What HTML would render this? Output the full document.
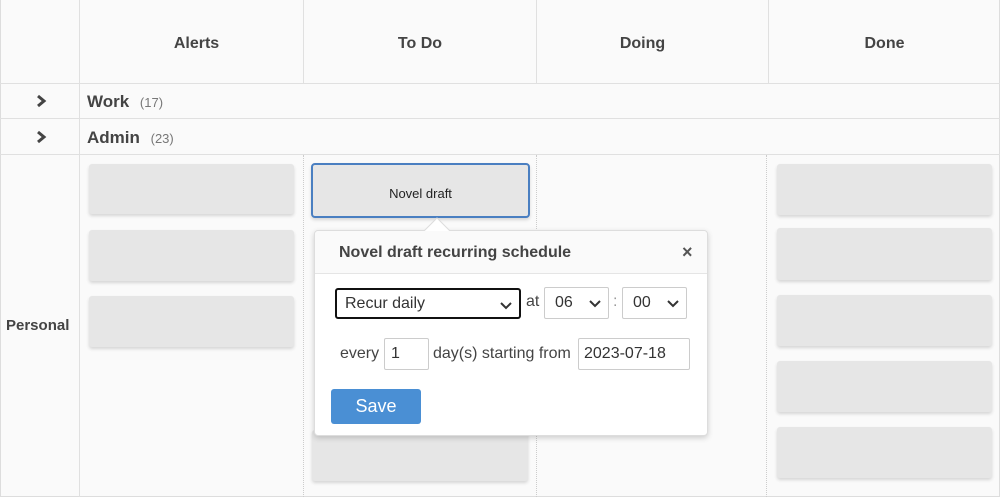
<!DOCTYPE html>
<html><head><style>
*{box-sizing:border-box;margin:0;padding:0}
body{width:1000px;height:497px;background:#fafafa;font-family:"Liberation Sans",Arial,sans-serif;position:relative;overflow:hidden;color:#444}
.a{position:absolute}
.hl{position:absolute;height:1px;background:#e0e0e0}
.vl{position:absolute;width:1px;background:#e0e0e0}
.dl{position:absolute;width:0;border-left:1px dotted #ccc}
.h{position:absolute;top:2px;height:83px;line-height:84px;text-align:center;font-weight:bold;font-size:16px;color:#444}
.card{position:absolute;background:#e6e6e6;border-radius:3px;box-shadow:0 2px 3px rgba(0,0,0,.15)}
.sel{position:absolute;border:1px solid #ccc;background:#fff;border-radius:2px;font-size:16px;color:#333;padding-left:8px;line-height:30px}
.sel svg{position:absolute;right:7px;top:12px}
</style></head><body>
<div class="a" style="left:0;top:0;width:1000px;height:497px;border:1px solid #ddd;border-top:none"></div>
<div class="hl" style="left:0;top:83px;width:1000px"></div>
<div class="hl" style="left:0;top:118px;width:1000px"></div>
<div class="hl" style="left:0;top:154px;width:1000px"></div>
<div class="vl" style="left:79px;top:0;height:497px"></div>
<div class="vl" style="left:303px;top:0;height:83px"></div>
<div class="vl" style="left:536px;top:0;height:83px"></div>
<div class="vl" style="left:768px;top:0;height:83px"></div>
<div class="dl" style="left:303px;top:155px;height:342px"></div>
<div class="dl" style="left:536px;top:155px;height:342px"></div>
<div class="dl" style="left:766px;top:155px;height:342px"></div>
<div class="h" style="left:80px;width:233px">Alerts</div>
<div class="h" style="left:304px;width:232px">To Do</div>
<div class="h" style="left:537px;width:211px">Doing</div>
<div class="h" style="left:769px;width:231px">Done</div>
<svg class="a" style="left:35px;top:94px" width="12" height="14"><path d="M3 2l6 5-6 5" fill="none" stroke="#444" stroke-width="3"/></svg>
<svg class="a" style="left:35px;top:130px" width="12" height="14"><path d="M3 2l6 5-6 5" fill="none" stroke="#444" stroke-width="3"/></svg>
<div class="a" style="left:87px;top:92px;font-size:17px;font-weight:bold">Work <span style="font-weight:normal;font-size:13px;color:#777;margin-left:6px">(17)</span></div>
<div class="a" style="left:87px;top:128px;font-size:17px;font-weight:bold">Admin <span style="font-weight:normal;font-size:13px;color:#777;margin-left:6px">(23)</span></div>
<div class="a" style="left:6px;top:317px;font-size:15px;font-weight:bold">Personal</div>
<div class="card" style="left:89px;top:164px;width:205px;height:50px"></div>
<div class="card" style="left:89px;top:230px;width:205px;height:51px"></div>
<div class="card" style="left:89px;top:296px;width:205px;height:51px"></div>
<div class="card" style="left:777px;top:164px;width:215px;height:51px"></div>
<div class="card" style="left:777px;top:228px;width:215px;height:52px"></div>
<div class="card" style="left:777px;top:295px;width:215px;height:51px"></div>
<div class="card" style="left:777px;top:361px;width:215px;height:51px"></div>
<div class="card" style="left:777px;top:427px;width:215px;height:51px"></div>
<div class="card" style="left:312px;top:430px;width:216px;height:51px"></div>
<div class="card" style="left:311px;top:163px;width:219px;height:55px;border:2px solid #4a7fc1;border-radius:4px;text-align:center;line-height:58px;font-size:13px;color:#222">Novel draft</div>
<div class="a" style="left:314px;top:230px;width:394px;height:206px;background:#fff;border:1px solid #ddd;border-radius:4px;box-shadow:0 2px 6px rgba(0,0,0,.18)"></div>
<svg class="a" style="left:423px;top:216px" width="28" height="16"><path d="M1 15L14 2l13 13" fill="#fff" stroke="#ddd"/></svg>
<div class="a" style="left:315px;top:231px;width:392px;height:43px;background:#fafafa;border-bottom:1px solid #e5e5e5;border-radius:4px 4px 0 0"></div>
<div class="a" style="left:339px;top:244px;font-size:16px;font-weight:bold;color:#444">Novel draft recurring schedule</div>
<div class="a" style="left:682px;top:242px;font-size:18px;font-weight:bold;color:#555">×</div>
<div class="sel" style="left:335px;top:288px;width:186px;height:31px;border:2px solid #111;border-radius:3px;line-height:28px">Recur daily<svg width="12" height="8"><path d="M1 1l5 5 5-5" fill="none" stroke="#333" stroke-width="2"/></svg></div>
<div class="a" style="left:526px;top:293px;font-size:16px">at</div>
<div class="sel" style="left:544px;top:287px;width:65px;height:32px;padding-left:10px">06<svg width="12" height="8"><path d="M1 1l5 5 5-5" fill="none" stroke="#333" stroke-width="2"/></svg></div>
<div class="a" style="left:613px;top:293px;font-size:16px;color:#999">:</div>
<div class="sel" style="left:622px;top:287px;width:65px;height:32px;padding-left:10px">00<svg width="12" height="8"><path d="M1 1l5 5 5-5" fill="none" stroke="#333" stroke-width="2"/></svg></div>
<div class="a" style="left:340px;top:345px;font-size:16px">every</div>
<div class="sel" style="left:384px;top:338px;width:45px;height:32px;padding-left:6px">1</div>
<div class="a" style="left:433px;top:345px;font-size:16px">day(s) starting from</div>
<div class="sel" style="left:578px;top:338px;width:112px;height:32px;padding-left:5px">2023-07-18</div>
<div class="a" style="left:331px;top:389px;width:90px;height:35px;background:#4a8fd4;border-radius:3px;color:#fff;font-size:18px;text-align:center;line-height:35px">Save</div>
</body></html>
